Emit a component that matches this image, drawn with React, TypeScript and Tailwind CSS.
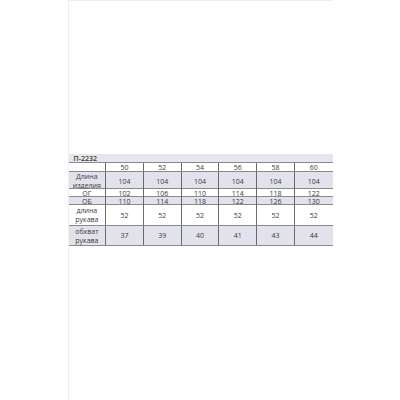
const sizes = ['50', '52', '54', '56', '58', '60']

const rows = [
  { label: ['Длина', 'изделия'], values: ['104', '104', '104', '104', '104', '104'], h: 'h-[17px]', shade: true },
  { label: ['ОГ'], values: ['102', '106', '110', '114', '118', '122'], h: 'h-[8px]', shade: false },
  { label: ['ОБ'], values: ['110', '114', '118', '122', '126', '130'], h: 'h-[8px]', shade: true },
  { label: ['длина', 'рукава'], values: ['52', '52', '52', '52', '52', '52'], h: 'h-[21px]', shade: false },
  { label: ['обхват', 'рукава'], values: ['37', '39', '40', '41', '43', '44'], h: 'h-[20px]', shade: true },
]

export default function App() {
  return (
    <div className="w-[400px] h-[400px] bg-white flex justify-center" style={{ fontFamily: '"Open Sans", "Liberation Sans", sans-serif' }}>
      <div className="w-[265px] h-full flex">
        <div className="w-px h-full bg-[#efefef]" />
        <div className="flex-1 flex flex-col">
          <div className="h-px w-full bg-[#efefef]" />
          <div className="mt-[153px] w-[264px] text-[7px] leading-[7px] text-[#3a3a3a]">
            {/* title */}
            <div className="h-[8px] bg-[#e6e6ef] px-[5px] font-semibold flex items-center">П-2232</div>

            {/* sizes row */}
            <div className="grid grid-cols-7 h-[10px] bg-white border-t border-b border-[#8a8a8a]">
              <div className="border-r border-[#6a6a6a]" />
              {sizes.map((s) => (
                <div key={s} className="flex items-center justify-center border-r border-[#6a6a6a] last:border-r-0">{s}</div>
              ))}
            </div>

            {rows.map((r, i) => (
              <div
                key={i}
                className={`grid grid-cols-7 border-b border-[#8a8a8a] ${r.h} ${r.shade ? 'bg-[#e2e2ec]' : 'bg-white'}`}
              >
                <div className="flex flex-col items-center justify-center border-r border-[#6a6a6a] leading-[9px]">
                  {r.label.map((l) => (
                    <span key={l}>{l}</span>
                  ))}
                </div>
                {r.values.map((v, j) => (
                  <div key={j} className="flex items-center justify-center border-r border-[#6a6a6a] last:border-r-0">{v}</div>
                ))}
              </div>
            ))}
          </div>
        </div>
      </div>
    </div>
  )
}
